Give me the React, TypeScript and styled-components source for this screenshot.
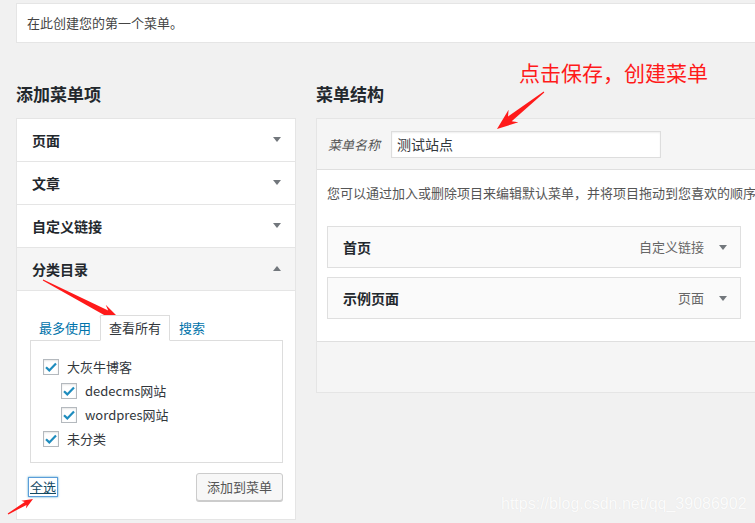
import React from "react";
import styled, { createGlobalStyle } from "styled-components";

const GlobalStyle = createGlobalStyle`
  html, body { margin: 0; padding: 0; background: #f1f1f1; }
  body {
    font-family: "Noto Sans CJK SC", "Noto Sans", sans-serif;
    font-size: 13px;
    color: #444;
    overflow: hidden;
  }
  * { box-sizing: border-box; }
`;

const Page = styled.div`
  position: relative;
  width: 755px;
  height: 523px;
  overflow: hidden;
  padding: 3px 0 0 16px;
`;

const Notice = styled.div`
  width: 770px;
  background: #fff;
  border: 1px solid #e5e5e5;
  padding: 9px 10px;
  line-height: 20px;
  font-size: 13px;
  color: #444;
`;

const Columns = styled.div`
  display: flex;
  align-items: flex-start;
  gap: 20px;
  margin-top: 39px;
`;

const LeftCol = styled.div`
  flex: 0 0 280px;
`;

const RightCol = styled.div`
  flex: 0 0 480px;
`;

const Heading = styled.h2`
  margin: 0 0 12px;
  font-size: 17px;
  font-weight: 700;
  line-height: 24px;
  color: #23282d;
`;

const AccBox = styled.div`
  background: #fff;
  border: 1px solid #e5e5e5;
`;

const AccRow = styled.div<{ $open?: boolean }>`
  height: 43px;
  display: flex;
  align-items: center;
  justify-content: space-between;
  padding: 0 14px 1px 15px;
  border-bottom: 1px solid #e5e5e5;
  background: ${(p) => (p.$open ? "#f5f5f5" : "#fff")};
  font-size: 14px;
  font-weight: 700;
  color: #23282d;
  line-height: 20px;
`;

const Caret = styled.span<{ $up?: boolean }>`
  width: 0;
  height: 0;
  border-left: 4px solid transparent;
  border-right: 4px solid transparent;
  ${(p) =>
    p.$up ? "border-bottom: 5px solid #72777c;" : "border-top: 5px solid #72777c;"}
`;

const AccContent = styled.div`
  padding: 24px 12px 18px 13px;
`;

const Tabs = styled.div`
  display: flex;
  margin-bottom: -1px;
  position: relative;
  z-index: 1;
`;

const Tab = styled.div<{ $active?: boolean }>`
  padding: 0 8px;
  line-height: 24px;
  font-size: 13px;
  border: 1px solid ${(p) => (p.$active ? "#ddd" : "transparent")};
  border-bottom-color: ${(p) => (p.$active ? "#fff" : "transparent")};
  background: ${(p) => (p.$active ? "#fff" : "transparent")};
  color: ${(p) => (p.$active ? "#32373c" : "#0073aa")};
`;

const TabPanel = styled.div`
  border: 1px solid #ddd;
  background: #fff;
  padding: 14px 12px 11px 12px;
`;

const CheckRow = styled.label<{ $indent?: number }>`
  display: flex;
  align-items: center;
  height: 24px;
  gap: 8px;
  padding-left: ${(p) => p.$indent ?? 0}px;
  font-size: 13px;
  color: #32373c;
  line-height: 20px;
`;

const Box = styled.span`
  width: 16px;
  height: 16px;
  flex: 0 0 16px;
  border: 1px solid #b4b9be;
  background: #fff;
  box-shadow: inset 0 1px 2px rgba(0, 0, 0, 0.1);
  display: flex;
  align-items: center;
  justify-content: center;
`;

const Actions = styled.div`
  display: flex;
  justify-content: space-between;
  align-items: center;
  margin-top: 10px;
  height: 28px;
`;

const SelectAll = styled.span`
  margin-left: -1px;
  padding: 0 1px;
  line-height: 18px;
  font-size: 13px;
  color: #124964;
  text-decoration: underline;
  box-shadow: 0 0 0 1px #5b9dd9, 0 0 2px 1px rgba(30, 140, 190, 0.8);
`;

const Button = styled.button`
  height: 28px;
  padding: 0 10px;
  border: 1px solid #ccc;
  border-radius: 3px;
  background: #f7f7f7;
  box-shadow: 0 1px 0 #ccc;
  color: #555;
  font-family: inherit;
  font-size: 13px;
  line-height: 26px;
`;

const MenuBox = styled.div`
  background: #fff;
  border: 1px solid #e5e5e5;
`;

const MenuHeader = styled.div`
  background: #f5f5f5;
  border-bottom: 1px solid #dfdfdf;
  padding: 12px 11px 11px;
  display: flex;
  align-items: center;
  gap: 11px;
`;

const NameLabel = styled.span`
  font-style: italic;
  font-size: 13px;
  color: #555;
  line-height: 20px;
`;

const NameInput = styled.div`
  width: 270px;
  height: 27px;
  border: 1px solid #ddd;
  background: #fff;
  box-shadow: inset 0 1px 2px rgba(0, 0, 0, 0.07);
  padding: 0 5px;
  font-size: 14px;
  line-height: 25px;
  color: #32373c;
`;

const MenuBody = styled.div`
  padding: 13px 10px 22px;
`;

const Desc = styled.div`
  white-space: nowrap;
  line-height: 20px;
  font-size: 13px;
  color: #555;
`;

const ItemList = styled.div`
  margin-top: 23px;
  display: flex;
  flex-direction: column;
  gap: 9px;
`;

const Item = styled.div`
  width: 414px;
  height: 42px;
  border: 1px solid #dfdfdf;
  background: #fafafa;
  display: flex;
  align-items: center;
  padding: 0 13px 0 15px;
`;

const ItemTitle = styled.span`
  flex: 1;
  font-size: 14px;
  font-weight: 700;
  color: #23282d;
  line-height: 20px;
`;

const ItemType = styled.span`
  font-size: 13px;
  color: #666;
  line-height: 20px;
  margin-right: 15px;
`;

const MenuFooter = styled.div`
  background: #f5f5f5;
  border-top: 1px solid #dfdfdf;
  height: 51px;
`;

const Overlay = styled.svg`
  position: absolute;
  left: 0;
  top: 0;
  pointer-events: none;
`;

const Note = styled.div`
  position: absolute;
  left: 519px;
  top: 59px;
  font-size: 21px;
  line-height: 26px;
  color: #ff1a1a;
  white-space: nowrap;
`;

const Watermark = styled.div`
  position: absolute;
  left: 501px;
  top: 494px;
  font-family: "Liberation Sans", Arial, sans-serif;
  font-size: 16px;
  line-height: 20px;
  color: rgba(255, 255, 255, 0.9);
  text-shadow: 0 0 1px rgba(0, 0, 0, 0.08);
  white-space: nowrap;
`;

function arrowPoints(
  tx: number,
  ty: number,
  hx: number,
  hy: number,
  hl: number,
  hw: number,
  w0: number,
  w1: number
) {
  const dx = hx - tx;
  const dy = hy - ty;
  const len = Math.hypot(dx, dy);
  const ux = dx / len;
  const uy = dy / len;
  const nx = -uy;
  const ny = ux;
  const neckX = hx - ux * hl * 0.78;
  const neckY = hy - uy * hl * 0.78;
  const barbX = hx - ux * hl;
  const barbY = hy - uy * hl;
  const pts = [
    [tx + (nx * w0) / 2, ty + (ny * w0) / 2],
    [neckX + (nx * w1) / 2, neckY + (ny * w1) / 2],
    [barbX + (nx * hw) / 2, barbY + (ny * hw) / 2],
    [hx, hy],
    [barbX - (nx * hw) / 2, barbY - (ny * hw) / 2],
    [neckX - (nx * w1) / 2, neckY - (ny * w1) / 2],
    [tx - (nx * w0) / 2, ty - (ny * w0) / 2],
  ];
  return pts.map((p) => `${p[0].toFixed(1)},${p[1].toFixed(1)}`).join(" ");
}

const Check = () => (
  <svg width="12" height="10" viewBox="0 0 12 10">
    <path d="M1 5.2 L4.3 8.4 L11 1.4" fill="none" stroke="#1e8cbe" strokeWidth="2.2" />
  </svg>
);

const categories = [
  { label: "大灰牛博客", indent: 0 },
  { label: "dedecms网站", indent: 18 },
  { label: "wordpres网站", indent: 18 },
  { label: "未分类", indent: 0 },
];

const menuItems = [
  { title: "首页", type: "自定义链接" },
  { title: "示例页面", type: "页面" },
];

export default function App() {
  return (
    <>
      <GlobalStyle />
      <Page>
        <Notice>在此创建您的第一个菜单。</Notice>
        <Columns>
          <LeftCol>
            <Heading>添加菜单项</Heading>
            <AccBox>
              <AccRow>
                页面
                <Caret />
              </AccRow>
              <AccRow>
                文章
                <Caret />
              </AccRow>
              <AccRow>
                自定义链接
                <Caret />
              </AccRow>
              <AccRow $open>
                分类目录
                <Caret $up />
              </AccRow>
              <AccContent>
                <Tabs>
                  <Tab>最多使用</Tab>
                  <Tab $active>查看所有</Tab>
                  <Tab>搜索</Tab>
                </Tabs>
                <TabPanel>
                  {categories.map((c) => (
                    <CheckRow key={c.label} $indent={c.indent}>
                      <Box>
                        <Check />
                      </Box>
                      {c.label}
                    </CheckRow>
                  ))}
                </TabPanel>
                <Actions>
                  <SelectAll>全选</SelectAll>
                  <Button>添加到菜单</Button>
                </Actions>
              </AccContent>
            </AccBox>
          </LeftCol>
          <RightCol>
            <Heading>菜单结构</Heading>
            <MenuBox>
              <MenuHeader>
                <NameLabel>菜单名称</NameLabel>
                <NameInput>测试站点</NameInput>
              </MenuHeader>
              <MenuBody>
                <Desc>
                  您可以通过加入或删除项目来编辑默认菜单，并将项目拖动到您喜欢的顺序。点击每个项目右边的箭头来显示更多设置选项。
                </Desc>
                <ItemList>
                  {menuItems.map((m) => (
                    <Item key={m.title}>
                      <ItemTitle>{m.title}</ItemTitle>
                      <ItemType>{m.type}</ItemType>
                      <Caret />
                    </Item>
                  ))}
                </ItemList>
              </MenuBody>
              <MenuFooter />
            </MenuBox>
          </RightCol>
        </Columns>
        <Note>点击保存，创建菜单</Note>
        <Overlay width="755" height="523" viewBox="0 0 755 523">
          <polygon points={arrowPoints(43, 280, 122, 321, 22, 14, 1, 6)} fill="#ff1a1a" />
          <polygon points={arrowPoints(544, 92, 497, 129, 21, 16, 1, 6)} fill="#ff1a1a" />
          <polygon points={arrowPoints(8, 514, 33, 499, 11, 9, 1, 3.5)} fill="#ff1a1a" />
        </Overlay>
        <Watermark>https://blog.csdn.net/qq_39086902</Watermark>
      </Page>
    </>
  );
}
